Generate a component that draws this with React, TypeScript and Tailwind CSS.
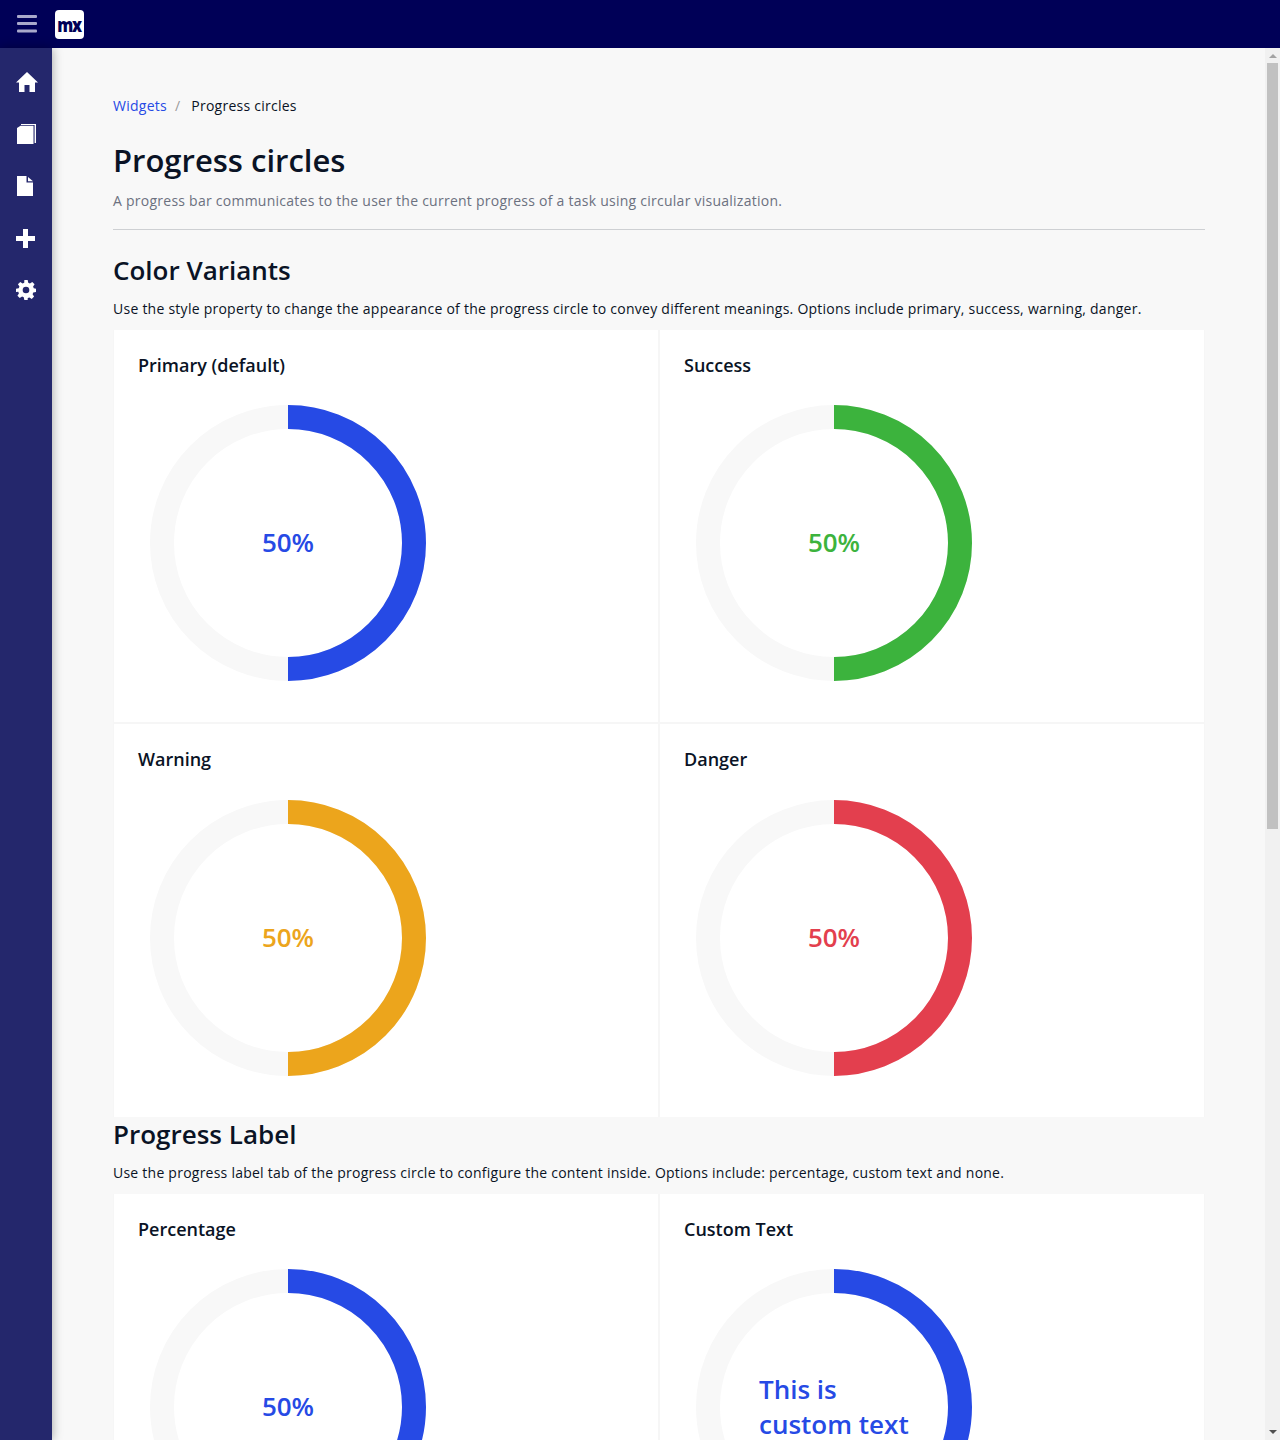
import React from "react"

const BLUE = "#264ae5"

function Circle({ color, label }: { color: string; label: React.ReactNode }) {
  return (
    <div className="relative ml-3 h-[276px] w-[276px]">
      <svg width="276" height="276" viewBox="0 0 276 276" className="block">
        <circle cx="138" cy="138" r="126" fill="none" stroke="#f8f8f8" strokeWidth="24" />
        <path d="M138 12 A126 126 0 0 1 138 264" fill="none" stroke={color} strokeWidth="24" />
      </svg>
      <div className="absolute inset-0 flex items-center justify-center">{label}</div>
    </div>
  )
}

function Percent({ className }: { className: string }) {
  return <span className={`-mt-[2px] text-[26px] font-semibold leading-none ${className}`}>50%</span>
}

function Card({ title, children, right, bottom }: { title: string; children: React.ReactNode; right?: boolean; bottom?: boolean }) {
  return (
    <div className={`border-[#f6f6f6] bg-white pl-6 pt-6 ${bottom ? "h-[393px]" : "h-[394px] border-b-2"} ${right ? "" : "border-r-2"}`}>
      <h5 className={`text-lg font-semibold leading-[22px] text-[#0a1325] ${bottom ? "mb-[30px]" : "mb-[29px]"}`}>{title}</h5>
      {children}
    </div>
  )
}

function Hamburger() {
  return (
    <svg width="20" height="18" viewBox="0 0 20 18" fill="#a9a9cb">
      <rect x="0" y="0" width="20" height="3" rx="1" />
      <rect x="0" y="7" width="20" height="3" rx="1" />
      <rect x="0" y="14.500" width="20" height="3" rx="1" />
    </svg>
  )
}

function Logo() {
  return (
    <div className="flex h-[29px] w-[29px] items-center justify-center rounded-[4px] bg-white">
      <span className="-ml-[1px] scale-y-125 text-[16px] font-extrabold leading-none tracking-[-1.2px] text-[#000057]">mx</span>
    </div>
  )
}

function NavIcon({ children }: { children: React.ReactNode }) {
  return <div className="flex h-[52px] w-[52px] items-center pl-4">{children}</div>
}

function Scrollbar() {
  return (
    <aside className="flex w-[15px] shrink-0 flex-col items-center bg-[#f1f1f1] pb-[6px] pt-[6px]">
      <div className="h-0 w-0 border-x-[4px] border-b-[4px] border-x-transparent border-b-[#a3a3a3]" />
      <div className="mt-[5px] h-[766px] w-[11px] bg-[#c1c1c1]" />
      <div className="flex-1" />
      <div className="h-0 w-0 border-x-[4px] border-t-[4px] border-x-transparent border-t-[#505050]" />
    </aside>
  )
}

export default function App() {
  return (
    <div className="flex h-[1440px] flex-col overflow-hidden bg-[#f8f8f8] font-['Open_Sans',sans-serif]">
      <header className="flex h-12 shrink-0 items-center gap-[18px] bg-[#000057] pl-[17px]">
        <Hamburger />
        <Logo />
      </header>
      <div className="flex min-h-0 flex-1">
        <nav className="z-10 w-[52px] shrink-0 bg-[#24276c] pt-2 shadow-[0_0_10px_rgba(0,0,0,0.35)]">
          <NavIcon>
            <svg width="22" height="20" viewBox="0 0 22 20" fill="#fff">
              <path d="M11 0 L22 10.500 H19 V20 H13.500 V13 H8.500 V20 H3 V10.500 H0 Z" />
            </svg>
          </NavIcon>
          <NavIcon>
            <svg width="20" height="20" viewBox="0 0 20 20" fill="#fff" className="ml-[1px]">
              <path d="M0 4 L3.500 1.800 H16.500 V20 H0 Z" />
              <path d="M4 0 H19 V19 H17.600 V1 H4 Z" />
            </svg>
          </NavIcon>
          <NavIcon>
            <svg width="16" height="20" viewBox="0 0 16 20" fill="#fff" className="ml-[1px]">
              <path d="M0 0 H9.500 V6.500 H16 V20 H0 Z" />
              <path d="M11 1 L16 5.200 H11 Z" />
            </svg>
          </NavIcon>
          <NavIcon>
            <svg width="19" height="19" viewBox="0 0 19 19" fill="#fff">
              <path d="M7 0 H12 V7 H19 V12 H12 V19 H7 V12 H0 V7 H7 Z" />
            </svg>
          </NavIcon>
          <NavIcon>
            <svg width="20" height="20" viewBox="0 0 24 24" fill="#fff">
              <path
                fillRule="evenodd"
                d="M10 0h4l.7 3.300 2 .8L19.500 2.300l2.800 2.800-1.800 2.800.8 2L24 10.600v3.800l-3.300.7-.8 2 1.800 2.800-2.800 2.800-2.800-1.800-2 .8L14 24h-4l-.7-3.300-2-.8-2.800 1.800-2.800-2.800 1.800-2.800-.8-2L0 14.400v-3.800l3.300-.7.8-2L2.300 5.100l2.800-2.800 2.800 1.800 2-.8zM12 8a4 4 0 1 0 0 8 4 4 0 0 0 0-8z"
              />
            </svg>
          </NavIcon>
        </nav>
        <main className="min-w-0 flex-1 overflow-hidden bg-[#f8f8f8]">
          <div className="pl-[61px] pr-[60px] pt-12 text-[#0a1325]">
            <div className="mb-[25px] flex h-5 items-center text-sm leading-5 tracking-[0.25px]">
              <span className="text-[#264ae5]">Widgets</span>
              <span className="ml-2 mr-[11px] text-[#9a9a9a]">/</span>
              <span>Progress circles</span>
            </div>
            <h1 className="text-[31px] font-semibold leading-[38px]">Progress circles</h1>
            <p className="mt-3 text-sm leading-5 tracking-[0.25px] text-[#6c7180]">
              A progress bar communicates to the user the current progress of a task using circular visualization.
            </p>
            <hr className="mt-[18px] border-[#ced0d3]" />
            <h2 className="mt-[22px] text-[26px] font-semibold leading-[36px]">Color Variants</h2>
            <p className="mb-[11px] mt-[11px] text-sm leading-5 tracking-[0.25px]">
              Use the style property to change the appearance of the progress circle to convey different meanings. Options include primary, success, warning, danger.
            </p>
            <div className="grid grid-cols-[546px_1fr] border-x border-[#f6f6f6]">
              <Card title="Primary (default)">
                <Circle color={BLUE} label={<Percent className="text-[#264ae5]" />} />
              </Card>
              <Card title="Success" right>
                <Circle color="#3cb33d" label={<Percent className="text-[#3cb33d]" />} />
              </Card>
              <Card title="Warning" bottom>
                <Circle color="#eca51c" label={<Percent className="text-[#eca51c]" />} />
              </Card>
              <Card title="Danger" right bottom>
                <Circle color="#e33f4e" label={<Percent className="text-[#e33f4e]" />} />
              </Card>
            </div>
            <h2 className="-mt-px text-[26px] font-semibold leading-[36px]">Progress Label</h2>
            <p className="mb-[11px] mt-[11px] text-sm leading-5 tracking-[0.24px]">
              Use the progress label tab of the progress circle to configure the content inside. Options include: percentage, custom text and none.
            </p>
            <div className="grid grid-cols-[546px_1fr] border-x border-[#f6f6f6]">
              <Card title="Percentage">
                <Circle color={BLUE} label={<Percent className="text-[#264ae5]" />} />
              </Card>
              <Card title="Custom Text" right>
                <Circle
                  color={BLUE}
                  label={
                    <span className="w-[150px] text-[26px] font-semibold leading-[35px] text-[#264ae5]">
                      This is custom text
                    </span>
                  }
                />
              </Card>
            </div>
          </div>
        </main>
        <Scrollbar />
      </div>
    </div>
  )
}
